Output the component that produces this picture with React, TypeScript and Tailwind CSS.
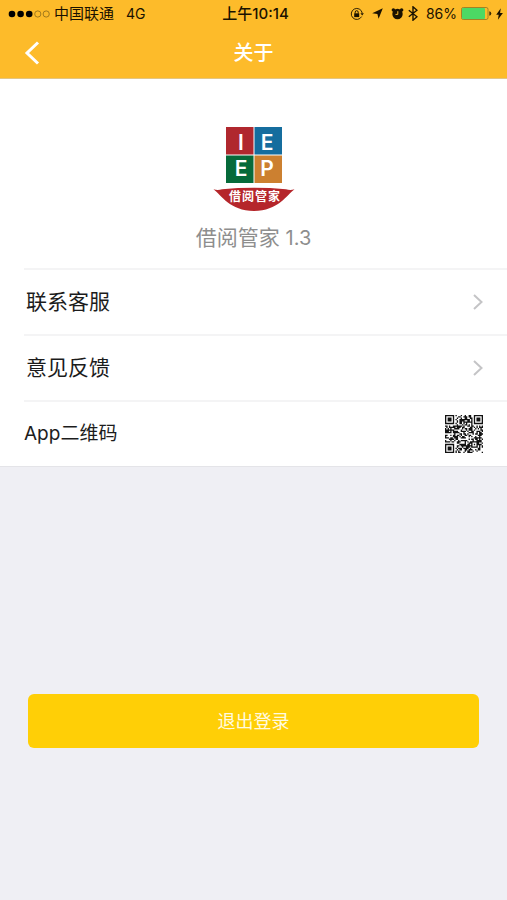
import React from "react";

const QR_SIZE = 29;

const inFinder = (x: number, y: number, fx: number, fy: number) =>
  x >= fx - 1 && x <= fx + 7 && y >= fy - 1 && y <= fy + 7;

const finderDark = (x: number, y: number) => {
  if (x < 0 || y < 0 || x > 6 || y > 6) return false;
  const ring = Math.max(Math.abs(x - 3), Math.abs(y - 3));
  return ring !== 2;
};

const buildQr = () => {
  const finders = [
    [0, 0],
    [QR_SIZE - 7, 0],
    [0, QR_SIZE - 7],
  ];
  let seed = 4177;
  let path = "";
  for (let y = 0; y < QR_SIZE; y++) {
    for (let x = 0; x < QR_SIZE; x++) {
      seed = (seed * 1103515 + 12345) % 2147483;
      let dark = seed % 100 < 54;
      const ring = Math.max(Math.abs(x - 22), Math.abs(y - 22));
      if (ring <= 2) dark = ring !== 1;
      for (const [fx, fy] of finders) {
        if (inFinder(x, y, fx, fy)) dark = finderDark(x - fx, y - fy);
      }
      if (dark) path += `M${x} ${y}h1v1h-1z`;
    }
  }
  return path;
};

const qrPath = buildQr();

const QrCode = () => (
  <svg viewBox="0 0 29 29" className="size-[38px]" role="img" aria-label="App二维码">
    <path d={qrPath} fill="#111" />
  </svg>
);

const Signal = () => (
  <svg width="42" height="8" viewBox="0 0 42 8" aria-hidden="true">
    <circle cx="4" cy="4" r="3.3" />
    <circle cx="12.6" cy="4" r="3.3" />
    <circle cx="21.2" cy="4" r="3.3" />
    <circle cx="29.8" cy="4" r="3.1" fill="none" stroke="#8a6818" strokeWidth="0.8" />
    <circle cx="38.2" cy="4" r="3.1" fill="none" stroke="#8a6818" strokeWidth="0.8" />
  </svg>
);

const RotationLock = () => (
  <svg width="14" height="14" viewBox="0 0 14 14" fill="none" stroke="#1a1200" aria-hidden="true">
    <path d="M11.6 9.6A5.5 5.5 0 1 1 12.2 6" strokeWidth="0.9" />
    <path d="M10.4 6.2h3.5l-1.7 2.4z" fill="#1a1200" stroke="none" />
    <rect x="4.2" y="6.3" width="5" height="3.8" fill="#1a1200" stroke="none" />
    <path d="M5.2 6.5V5.2a1.5 1.5 0 0 1 3 0v1.3" strokeWidth="1" />
  </svg>
);

const LocationArrow = () => (
  <svg width="11" height="11" viewBox="0 0 11 11" aria-hidden="true">
    <path d="M10.8.2 6.6 10.8 5.4 6.1.2 5.2z" fill="#1a1200" />
  </svg>
);

const Alarm = () => (
  <svg width="13" height="13" viewBox="0 0 13 13" aria-hidden="true">
    <circle cx="6.5" cy="7" r="5.2" fill="#1a1200" />
    <circle cx="2.4" cy="3" r="1.8" fill="#1a1200" />
    <circle cx="10.6" cy="3" r="1.8" fill="#1a1200" />
    <path d="M6.8 4.2v3.2H4.5" fill="none" stroke="#fdbb2a" strokeWidth="1" />
  </svg>
);

const Bluetooth = () => (
  <svg width="10" height="15" viewBox="0 0 10 15" aria-hidden="true">
    <path d="M.8 4.2 9 10.8 5 14.2V.8l4 3.4-8.2 6.6" fill="none" stroke="#1a1200" strokeWidth="1.4" />
  </svg>
);

const Battery = () => (
  <svg width="31" height="13" viewBox="0 0 31 13" aria-hidden="true">
    <rect x="0.5" y="0.5" width="26.5" height="12" rx="1.8" fill="none" stroke="#8c7424" strokeWidth="0.8" />
    <rect x="1" y="1" width="23" height="11" rx="1" fill="#4cd964" />
    <path d="M28.3 4.3q2 .4 2 2.2t-2 2.2z" fill="#3a2b06" />
  </svg>
);

const Bolt = () => (
  <svg width="7" height="12" viewBox="0 0 7 12" aria-hidden="true">
    <path d="M4.8.3.2 6.8h2.5L1.9 11.8 6.9 4.9H4.1z" fill="#1a1200" />
  </svg>
);

const StatusBar = () => (
  <div className="grid h-[27px] grid-cols-[1fr_auto_1fr] items-center pr-1 pl-2 text-[15px] leading-5 text-[#1a1200]">
    <div className="flex items-center">
      <Signal />
      <span className="ml-1">中国联通</span>
      <span className="ml-3 text-[14px]">4G</span>
    </div>
    <div className="font-medium">上午10:14</div>
    <div className="flex items-center justify-end">
      <RotationLock />
      <span className="ml-2"><LocationArrow /></span>
      <span className="ml-2"><Alarm /></span>
      <span className="ml-1"><Bluetooth /></span>
      <span className="ml-2 text-[14px]">86%</span>
      <span className="ml-1"><Battery /></span>
      <span className="ml-1"><Bolt /></span>
    </div>
  </div>
);

const Logo = () => (
  <svg width="82" height="86" viewBox="0 0 82 86" role="img" aria-label="借阅管家">
    <rect x="13" y="1" width="27.5" height="27.5" fill="#b0282e" />
    <rect x="41.5" y="1" width="27.5" height="27.5" fill="#156d9e" />
    <rect x="13" y="29.5" width="27.5" height="27.5" fill="#066a3a" />
    <rect x="41.5" y="29.5" width="27.5" height="27.5" fill="#cc8030" />
    <g fill="#fff" fontSize="21" fontWeight="600" textAnchor="middle" fontFamily="Inter, sans-serif">
      <text x="28" y="24">I</text>
      <text x="54" y="24">E</text>
      <text x="28" y="50">E</text>
      <text x="54" y="50">P</text>
    </g>
    <path d="M.5 63.3Q5 64.5 9 63.2Q41 60.5 73 63.2Q77 64.5 81.5 63.3C74 69 65 85 41 85S8 69 .5 63.3z" fill="#b5262b" />
    <g fill="#fff" fontSize="12" fontWeight="700" textAnchor="middle" fontFamily="Noto Sans CJK SC, sans-serif">
      <text x="22" y="75">借</text>
      <text x="35" y="75">阅</text>
      <text x="48" y="75">管</text>
      <text x="61" y="75">家</text>
    </g>
  </svg>
);

const Chevron = () => (
  <svg width="10" height="16" viewBox="0 0 10 16" fill="none" stroke="#c4c4c6" strokeWidth="2" aria-hidden="true">
    <path d="m1 1 7.5 7L1 15" />
  </svg>
);

const links = ["联系客服", "意见反馈"];

const App = () => {
  return (
    <div className="flex min-h-screen flex-col bg-[#efeff4] font-['Inter','Noto_Sans_CJK_SC',sans-serif]">
      <header className="border-b border-[#e3c583] bg-[#fdbb2a]">
        <StatusBar />
        <div className="grid h-[51px] grid-cols-[1fr_auto_1fr] items-center px-6">
          <button type="button" aria-label="返回" className="w-4">
            <svg width="16" height="24" viewBox="0 0 16 24" fill="none" stroke="#fff" strokeWidth="3">
              <path d="M14 1.5 3 12l11 10.5" />
            </svg>
          </button>
          <h1 className="text-[20px] leading-6 font-medium text-white">关于</h1>
        </div>
      </header>

      <main>
        <section className="border-b border-[#e4e4e8] bg-white">
          <div className="flex flex-col items-center pt-[47px] pb-[14px]">
            <Logo />
            <p className="mt-[10px] text-[21px] leading-8 text-[#8e8e8e]">
              借阅管家 <span className="text-[20px]">1.3</span>
            </p>
          </div>
          <ul className="pl-6 text-[21px] text-[#1c1c1c]">
            {links.map((label) => (
              <li key={label} className="border-t-2 border-[#f4f4f5]">
                <a href="#" className="flex h-16 items-center justify-between pr-6 pl-[2px]">
                  <span>{label}</span>
                  <Chevron />
                </a>
              </li>
            ))}
            <li className="flex h-[66px] items-center justify-between border-t-2 border-[#f4f4f5] pr-6 text-[19px]">
              <span>App二维码</span>
              <QrCode />
            </li>
          </ul>
        </section>

        <div className="px-7 pt-[227px]">
          <button
            type="button"
            className="h-[54px] w-full rounded-md bg-[#ffcf06] text-[18px] text-[#fffbe0]"
          >
            退出登录
          </button>
        </div>
      </main>
    </div>
  );
};

export default App;
